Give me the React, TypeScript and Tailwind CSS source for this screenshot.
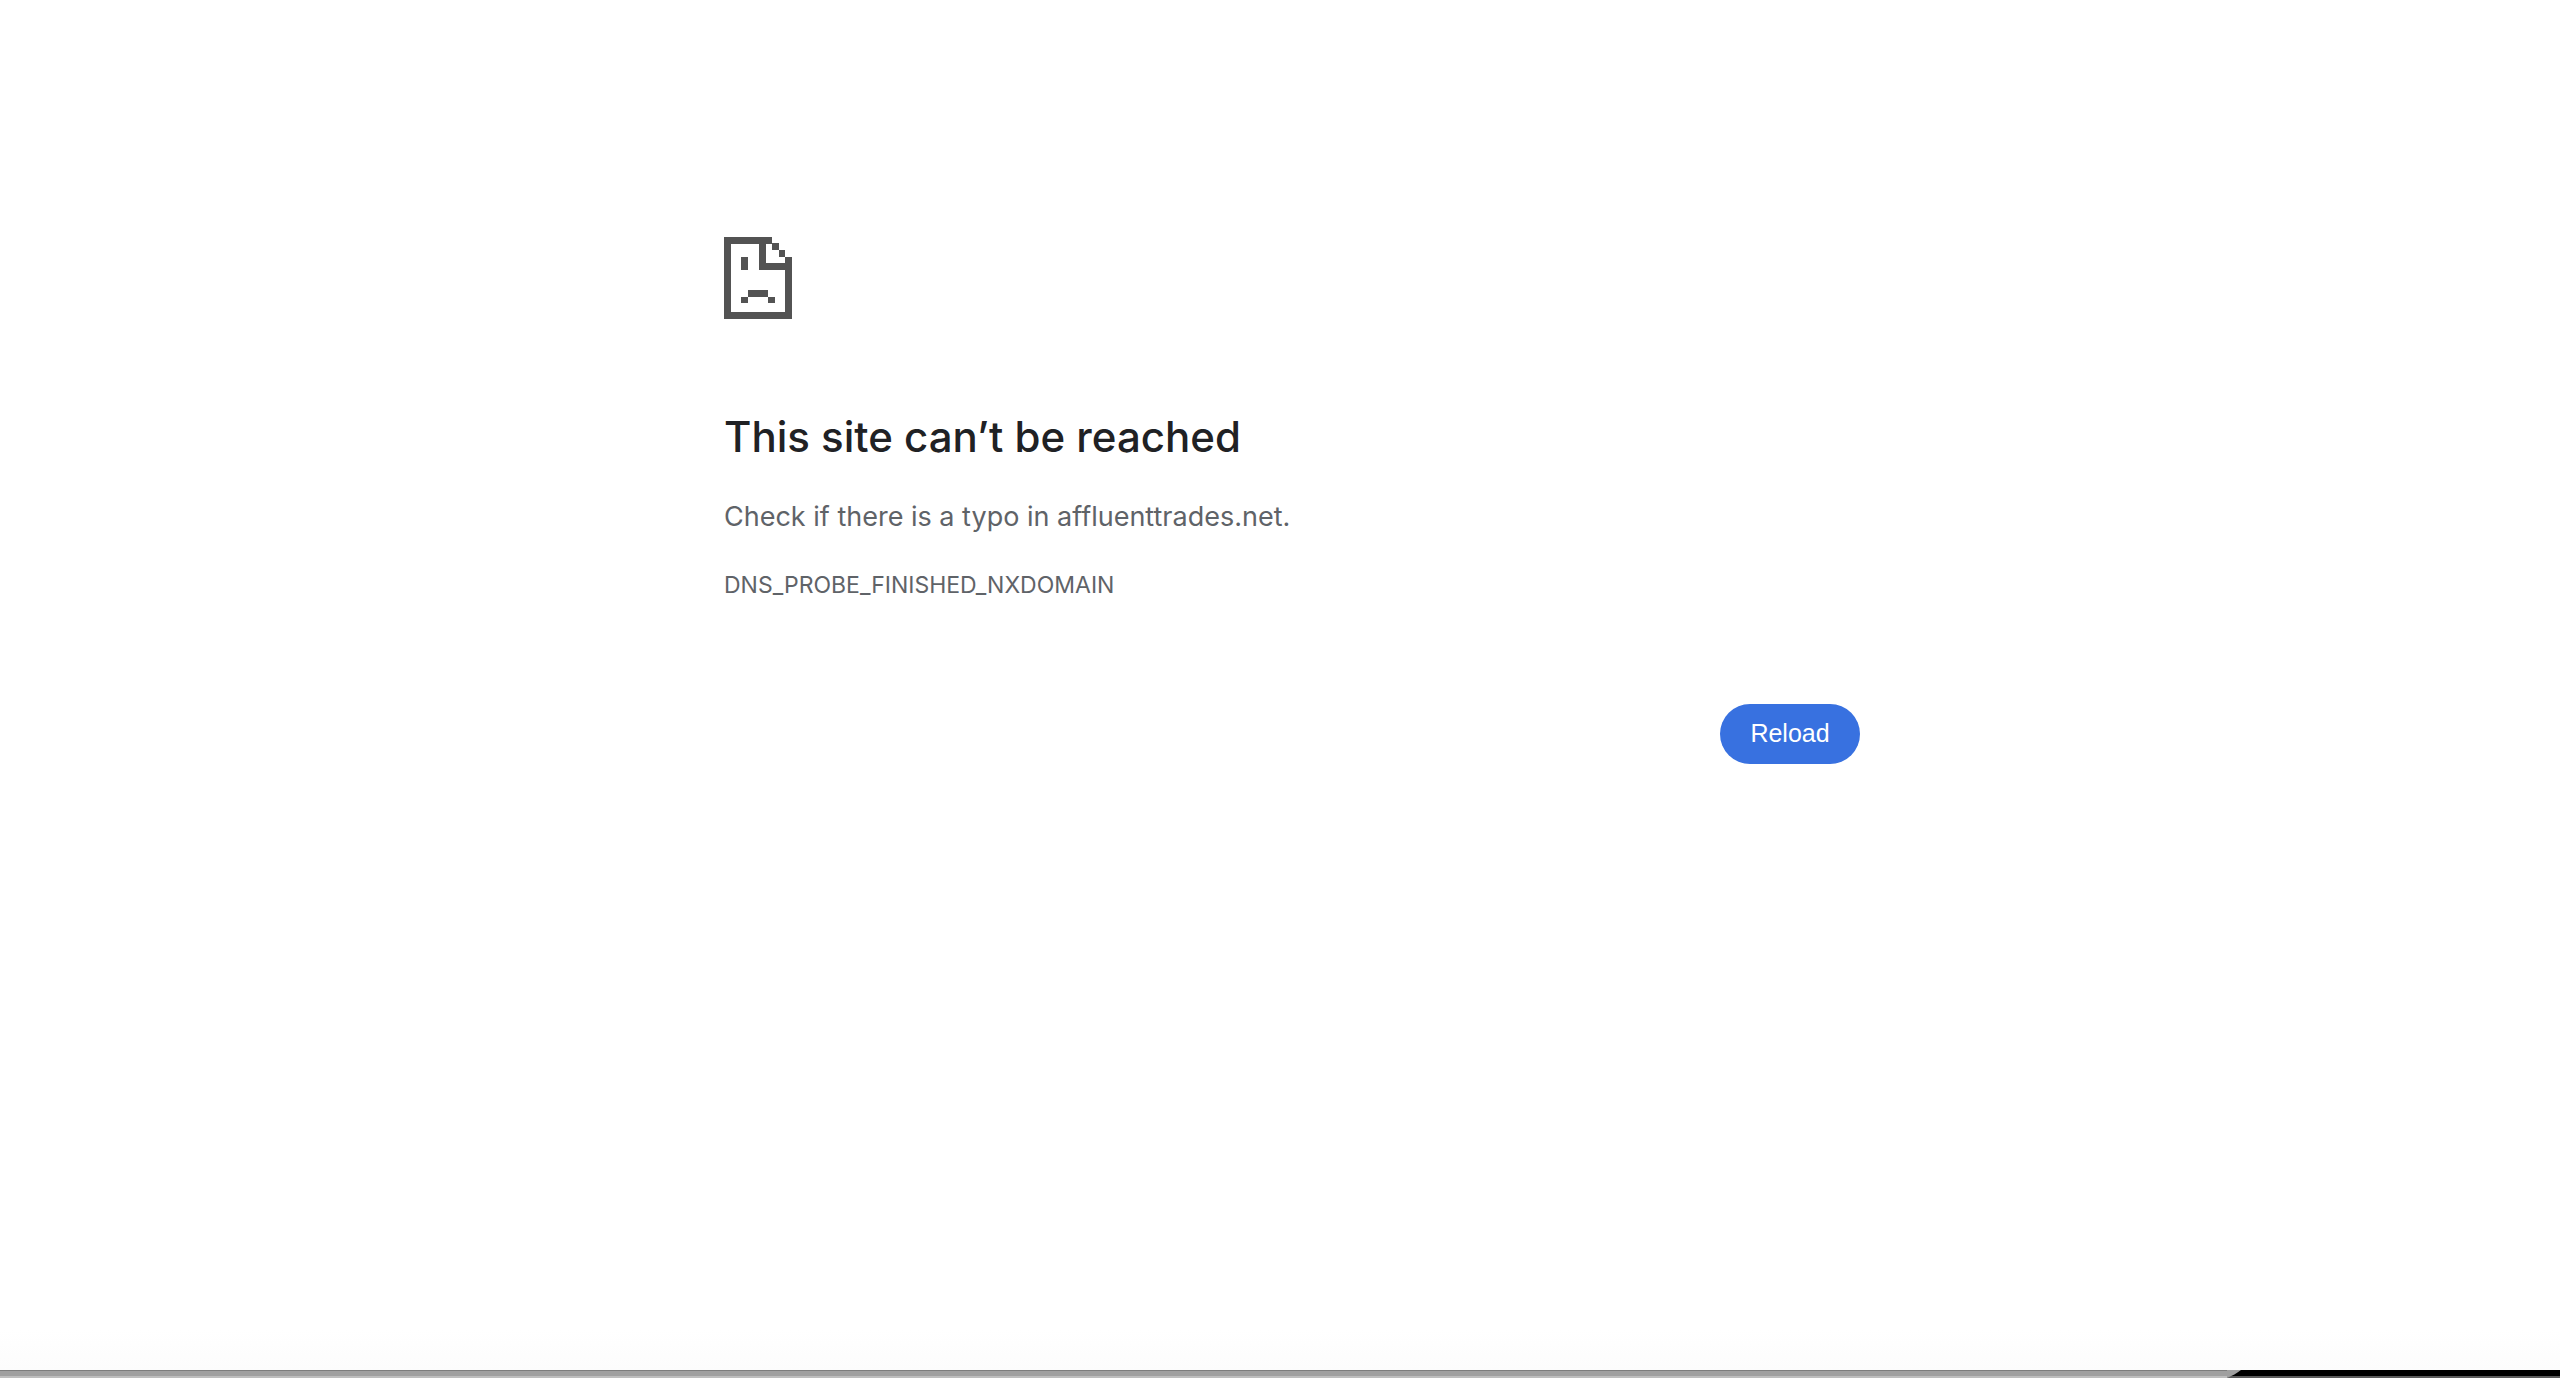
function SadPageIcon() {
  return (
    <svg width="68" height="82" viewBox="0 0 68 82" fill="#535353" aria-hidden="true">
      <path d="M0 0H48V7H7V75H61V33H35V6H42V26H61V20H68V82H0Z" />
      <path d="M48 6H55V13H48ZM55 13H61V20H55Z" />
      <path d="M17 20H24V33H17ZM24 53H44V60H24ZM17 60H24V66H17ZM44 60H51V66H44Z" />
    </svg>
  )
}

function WindowEdge() {
  return (
    <div className="bg-white">
      <div className="h-10 bg-linear-to-b from-white to-[#fcfcfc]" />
      <div className="flex h-2 bg-black">
        <div className="flex w-[87%] flex-col border-t border-[#7d7d7d]">
          <div className="h-[5px] bg-[#a0a0a0]" />
          <div className="h-[2px] bg-[#bebebe]" />
        </div>
        <svg className="h-2 w-4" viewBox="0 0 16 8" aria-hidden="true">
          <path d="M0 6H16V8H0Z" fill="#5c5c5c" />
          <path d="M0 0H14C10 3 5 6 0 8Z" fill="#a0a0a0" />
        </svg>
        <div className="flex-1 border-b-2 border-[#5c5c5c]" />
      </div>
    </div>
  )
}

export default function App() {
  return (
    <div className="flex min-h-screen flex-col bg-white font-['Inter',sans-serif] text-[#5f6368]">
      <main className="flex-1 pt-[237px] pl-6">
        <div className="mx-auto max-w-[1136px]">
          <SadPageIcon />
          <h1 className="mt-[90px] text-[42px] leading-[56px] font-medium text-[#202124]">
            This site can’t be reached
          </h1>
          <p className="mt-8 text-[27px] leading-10">Check if there is a typo in affluenttrades.net.</p>
          <p className="mt-8 text-[23px] leading-8">DNS_PROBE_FINISHED_NXDOMAIN</p>
          <div className="mt-[103px] flex justify-end">
            <button
              type="button"
              onClick={() => window.location.reload()}
              className="h-[60px] w-[140px] rounded-full bg-[#3871e0] font-['Liberation_Sans',sans-serif] text-[25px] text-white"
            >
              Reload
            </button>
          </div>
        </div>
      </main>
      <WindowEdge />
    </div>
  )
}
